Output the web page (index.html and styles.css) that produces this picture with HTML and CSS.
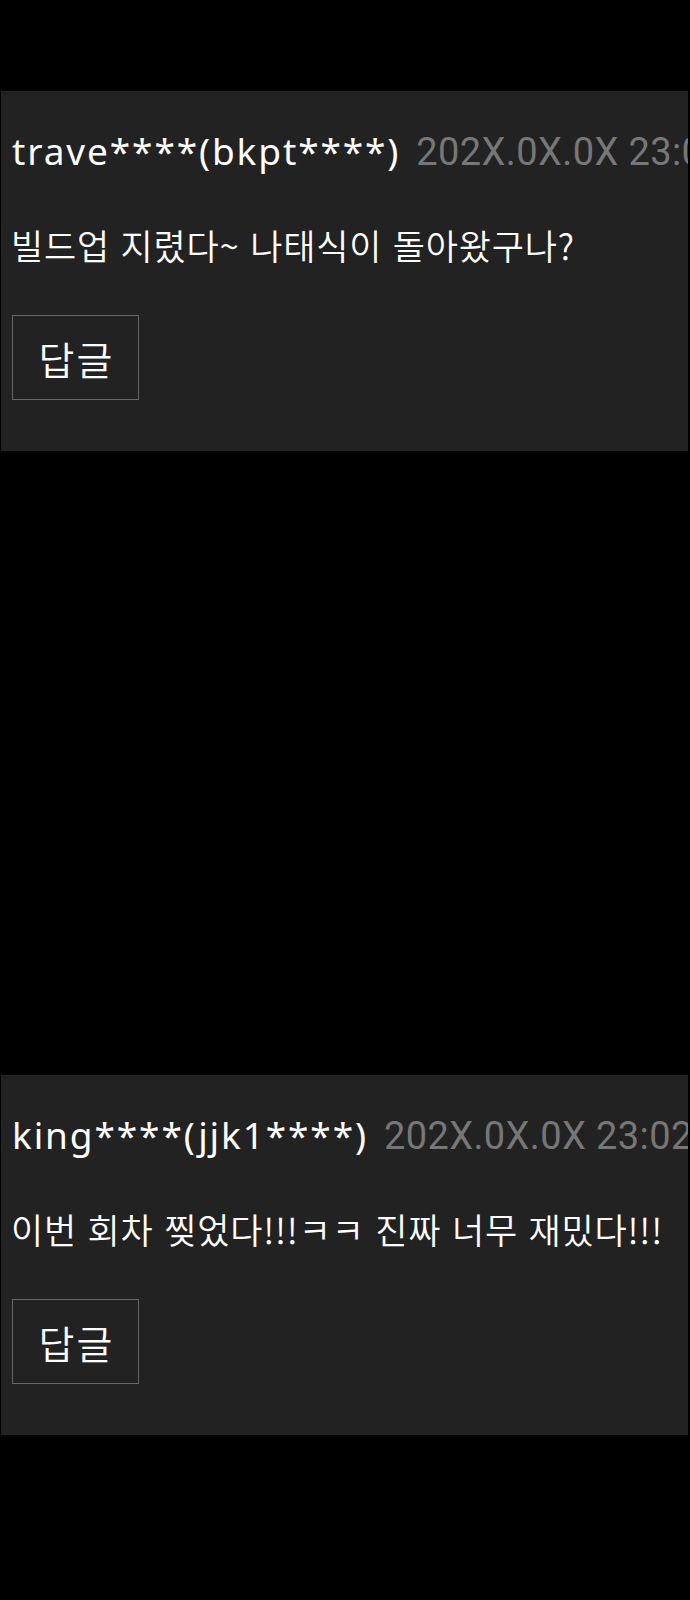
FILE: index.html
```html
<!DOCTYPE html>
<html lang="ko">
<head>
<meta charset="utf-8">
<title>댓글</title>
<link rel="stylesheet" href="styles.css">
</head>
<body>
<div class="list">
  <div class="comment">
    <div class="meta"><span class="user">trave****(bkpt****)</span><span class="date">202X.0X.0X 23:02</span></div>
    <p class="text">빌드업 지렸다~ 나태식이 돌아왔구나?</p>
    <button class="reply">답글</button>
  </div>
  <div class="comment second">
    <div class="meta"><span class="user">king****(jjk1****)</span><span class="date">202X.0X.0X 23:02</span></div>
    <p class="text">이번 회차 찢었다!!!ㅋㅋ 진짜 너무 재밌다!!!</p>
    <button class="reply">답글</button>
  </div>
</div>
</body>
</html>
```
FILE: styles.css
```css
html, body {
  margin: 0;
  padding: 0;
  background: #000;
}
body {
  font-family: "Noto Sans CJK KR", "Noto Sans", sans-serif;
  color: #fff;
}
.list {
  padding-top: 91px;
  padding-bottom: 100px;
}
.comment {
  margin: 0 2px 0 1px;
  background: #222;
  height: 360px;
  box-sizing: border-box;
  padding: 35px 0 0 11px;
  overflow: hidden;
}
.second {
  margin-top: 624px;
}
.meta {
  display: flex;
  align-items: baseline;
  white-space: nowrap;
  font-size: 37px;
  line-height: 50px;
}
.user {
  font-family: "Noto Sans", sans-serif;
  font-weight: 400;
  color: #fff;
  letter-spacing: 1.9px;
}
.date {
  margin-left: 16px;
  font-family: Roboto, "Noto Sans", sans-serif;
  font-size: 38px;
  letter-spacing: 0.4px;
  color: #777;
}
.text {
  margin: 48px 0 0 -1px;
  font-size: 35px;
  font-weight: 350;
  letter-spacing: 0.8px;
  line-height: 40px;
  white-space: nowrap;
}
.reply {
  display: block;
  margin-top: 50px;
  width: 127px;
  height: 85px;
  box-sizing: border-box;
  border: 1px solid #666;
  background: transparent;
  color: #fff;
  font-family: "Noto Sans CJK KR", sans-serif;
  font-weight: 350;
  font-size: 39px;
  letter-spacing: 2px;
  padding: 0 0 0 2px;
}
```
